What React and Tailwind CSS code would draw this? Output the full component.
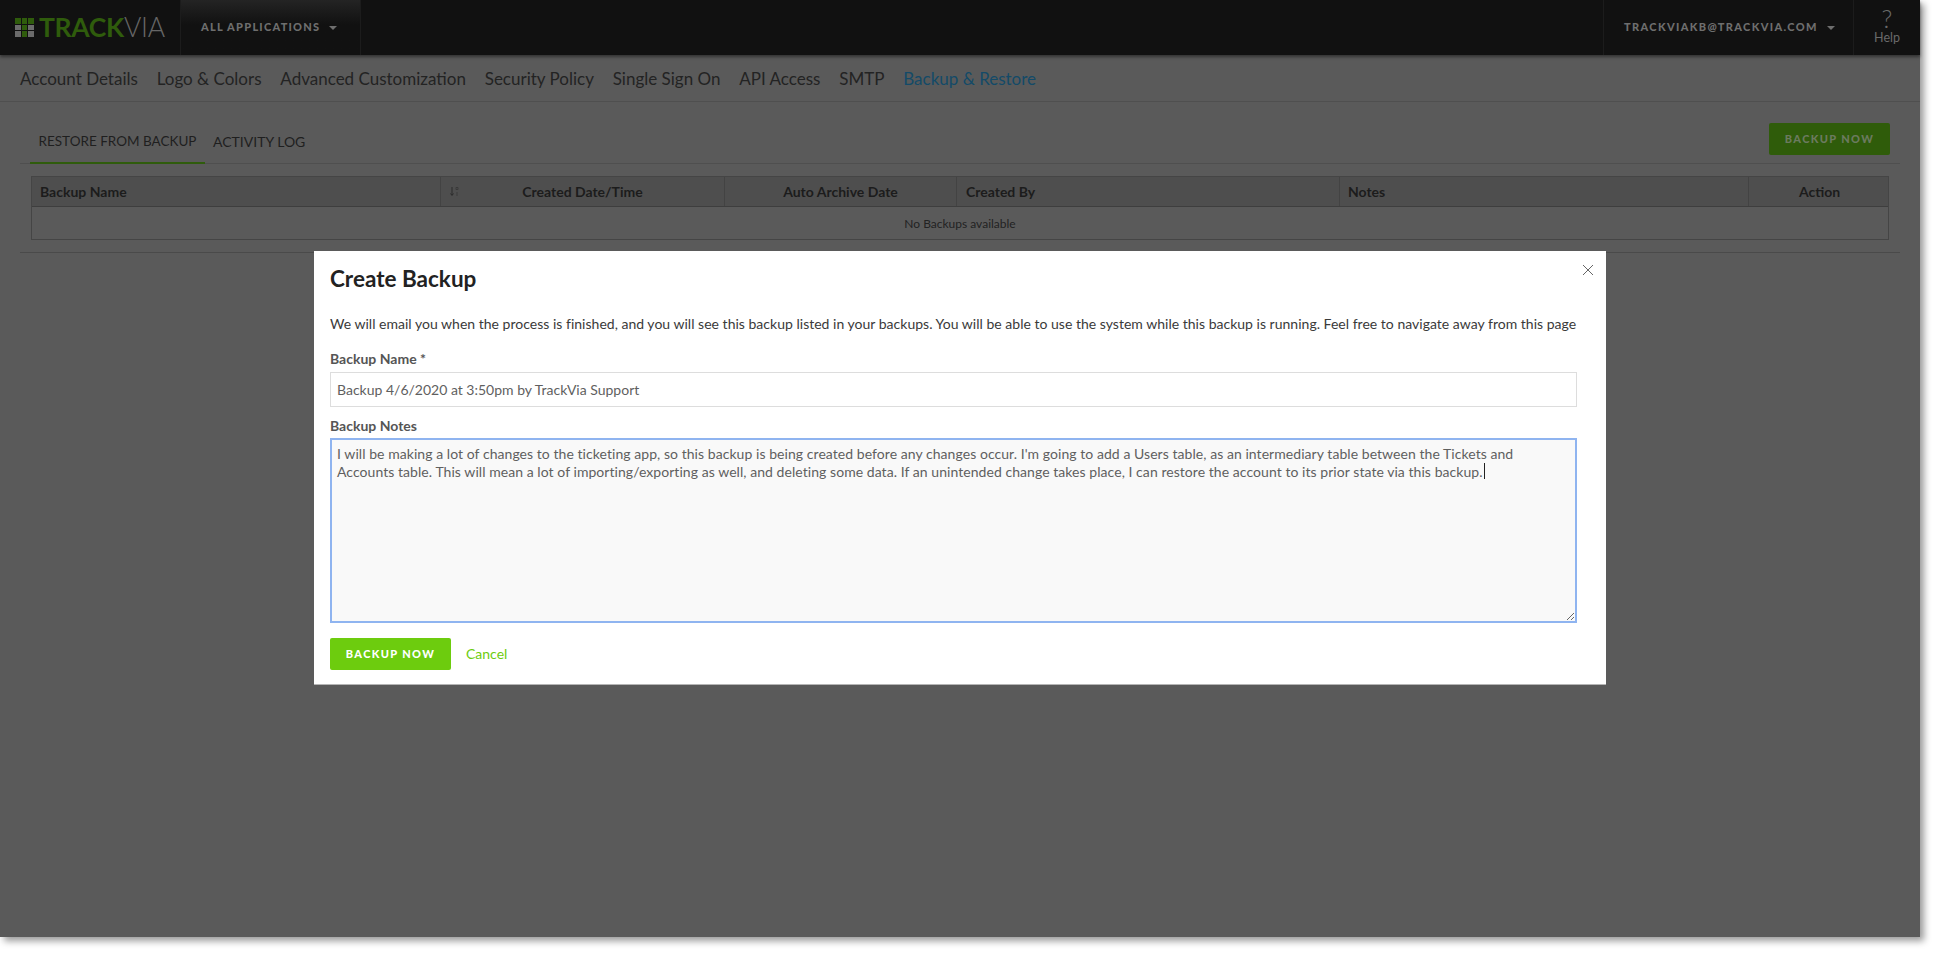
import React from 'react';

const navItems = [
  'Account Details',
  'Logo & Colors',
  'Advanced Customization',
  'Security Policy',
  'Single Sign On',
  'API Access',
  'SMTP',
];

const notes =
  "I will be making a lot of changes to the ticketing app, so this backup is being created before any changes occur. I'm going to add a Users table, as an intermediary table between the Tickets and Accounts table. This will mean a lot of importing/exporting as well, and deleting some data. If an unintended change takes place, I can restore the account to its prior state via this backup.";

const Caret = ({ className }) => (
  <span className={`inline-block w-0 h-0 border-x-[4px] border-x-transparent border-t-[4px] ${className}`} />
);

const Logo = () => {
  const cells = [1, 1, 1, 0, 1, 0, 0, 1, 0];
  return (
    <div className="flex items-center gap-[5px]">
      <div className="grid grid-cols-3 gap-px w-[19px] h-[19px]">
        {cells.map((on, i) => (
          <div key={i} className={on ? 'bg-[#2f5c0c]' : 'bg-[#6b6b6b]'} />
        ))}
      </div>
      <div className="text-[26.5px] leading-none tracking-[-0.3px]">
        <span className="text-[#2f5c0c] font-bold">TRACK</span>
        <span className="text-[#666666] font-light">VIA</span>
      </div>
    </div>
  );
};

const TopBar = () => (
  <header className="h-[55px] bg-[#111111] flex items-stretch shadow-[0_2px_3px_rgba(0,0,0,0.45)] relative">
    <div className="pl-[15px] w-[180px] flex items-center">
      <Logo />
    </div>
    <div className="w-[181px] flex items-center gap-[9px] pl-[20px] border-x border-[#1c1c1c] bg-gradient-to-b from-[#242424] to-[#111111] to-[45%] text-[11px] font-black tracking-[1.25px] text-[#6e6e6e]">
      ALL APPLICATIONS
      <Caret className="border-t-[#6e6e6e]" />
    </div>
    <div className="flex-1" />
    <div className="w-[251px] flex items-center gap-[9px] pl-[20px] border-x border-[#1c1c1c] text-[11px] font-black tracking-[1.35px] text-[#6e6e6e]">
      TRACKVIAKB@TRACKVIA.COM
      <Caret className="border-t-[#6e6e6e]" />
    </div>
    <div className="w-[66px] pt-[8px] flex flex-col items-center text-[#6a6a6a]">
      <span className="text-[25px] leading-[20px] font-light">?</span>
      <span className="mt-[2px] text-[12.5px] leading-[15px]">Help</span>
    </div>
  </header>
);

const NavBar = () => (
  <nav className="h-[47px] pt-[1px] border-b border-[#4f4f4f] flex items-center gap-[18.8px] pl-[20px] text-[17px] text-[#232323]">
    {navItems.map((item) => (
      <span key={item}>{item}</span>
    ))}
    <span className="text-[#134a68]">Backup &amp; Restore</span>
  </nav>
);

const Tabs = () => (
  <div className="mx-[20px] h-[62px] border-b border-[#4f4f4f] flex items-end pl-[10px] text-[13.5px] text-[#1f1f1f] relative">
    <div className="h-[40px] w-[175px] flex items-center justify-center pb-[4px] border-b-2 border-[#2f5c0c] -mb-px">
      RESTORE FROM BACKUP
    </div>
    <div className="h-[40px] flex items-center pb-[6px] ml-[8px] -mb-px text-[14px]">ACTIVITY LOG</div>
    <button className="absolute right-[10px] top-[21px] w-[121px] h-[32px] rounded-[2px] bg-[#2f5c0a] text-[#6b7a5f] text-[11px] font-black tracking-[1.35px]">
      BACKUP NOW
    </button>
  </div>
);

const BackupTable = () => (
  <div className="mx-[31px] mt-[12px] w-[1858px] border border-[#454545]">
    <div className="grid grid-cols-[409px_284px_232px_383px_409px_139px] h-[30px] bg-[#4e4e4e] border-b border-[#3e3e3e] text-[14px] font-bold text-[#1c1c1c]">
      <div className="flex items-center pl-[8px] border-r border-[#434343]">Backup Name</div>
      <div className="relative flex items-center justify-center border-r border-[#434343]">
        <svg className="absolute left-[8px] top-[9px]" width="11" height="11" viewBox="0 0 11 11" fill="none" stroke="#2a2a2a" strokeWidth="1">
          <path d="M3 1v8M1.5 7.5 3 9.5l1.5-2" />
          <path d="M7 1.5h2v2H7zM8 6v4" stroke="#3a3a3a" />
        </svg>
        Created Date/Time
      </div>
      <div className="flex items-center justify-center border-r border-[#434343]">Auto Archive Date</div>
      <div className="flex items-center pl-[9px] border-r border-[#434343]">Created By</div>
      <div className="flex items-center pl-[8px] border-r border-[#434343]">Notes</div>
      <div className="flex items-center justify-center pl-[2px]">Action</div>
    </div>
    <div className="h-[32px] pt-[1px] flex items-center justify-center text-[12px] text-[#222222]">No Backups available</div>
  </div>
);

const CreateBackupModal = () => (
  <div className="absolute left-[314px] top-[251px] w-[1292px] h-[434px] bg-white border-b border-[#b5b5b5] px-[16px]">
    <svg className="absolute right-[12px] top-[13px] text-[#666666]" width="12" height="12" viewBox="0 0 12 12" fill="none" stroke="currentColor" strokeWidth="1">
      <path d="M1 1l10 10M11 1 1 11" />
    </svg>
    <h2 className="pt-[15px] text-[22.5px] leading-[26px] font-bold text-[#222222]">Create Backup</h2>
    <p className="mt-[22px] text-[14px] leading-[20px] tracking-[0.015px] text-[#3a3a3a] whitespace-nowrap">
      We will email you when the process is finished, and you will see this backup listed in your backups. You will be able to use the system while this backup is running. Feel free to navigate away from this page
    </p>
    <label className="block mt-[15px] text-[14px] leading-[20px] font-bold text-[#555555]">Backup Name *</label>
    <input
      readOnly
      value="Backup 4/6/2020 at 3:50pm by TrackVia Support"
      className="block mt-[3px] w-[1247px] h-[35px] border border-[#dddddd] px-[6px] text-[14px] text-[#5f5f5f] outline-none"
    />
    <label className="block mt-[9px] text-[14px] leading-[20px] font-bold text-[#555555]">Backup Notes</label>
    <div className="relative mt-[2px] w-[1247px]">
      <textarea
        readOnly
        value={notes}
        className="block w-full h-[185px] border-2 border-[#8fb4f0] bg-[#f9f9f9] px-[5px] py-[5px] text-[14px] leading-[18px] tracking-[0.055px] text-[#5f5f5f] outline-none resize"
      />
      <span className="absolute left-[1154px] top-[25px] w-px h-[16px] bg-[#222222]" />
    </div>
    <div className="mt-[15px] flex items-center gap-[15px]">
      <button className="w-[121px] h-[32px] rounded-[2px] bg-[#6dcc0e] text-white text-[11px] font-black tracking-[1.35px]">
        BACKUP NOW
      </button>
      <span className="pb-[2px] text-[14px] text-[#6dcc0e]">Cancel</span>
    </div>
  </div>
);

export default function App() {
  return (
    <div className="w-[1950px] h-[967px] bg-white overflow-hidden font-['Lato',sans-serif]">
      <div className="relative w-[1920px] h-[937px] bg-[#5a5a5a] shadow-[4px_4px_7px_rgba(0,0,0,0.4)]">
        <TopBar />
        <NavBar />
        <Tabs />
        <BackupTable />
        <div className="mx-[20px] mt-[12px] border-t border-[#4a4a4a]" />
        <CreateBackupModal />
      </div>
    </div>
  );
}
